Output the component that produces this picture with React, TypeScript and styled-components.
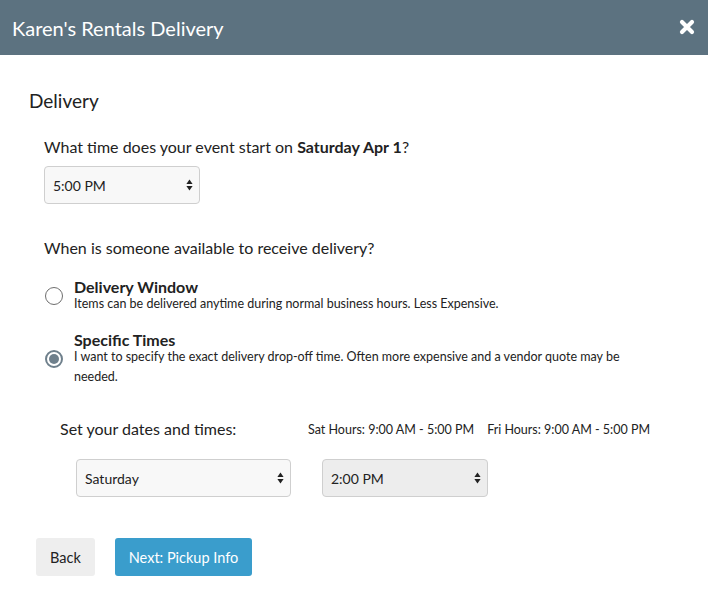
import React from "react";
import styled, { createGlobalStyle } from "styled-components";

const Global = createGlobalStyle`
  html, body { margin: 0; padding: 0; background: #fff; }
  body { font-family: Lato, "Open Sans", "Liberation Sans", sans-serif; color: #222; }
  * { box-sizing: border-box; }
`;

const Header = styled.header`
  height: 55px;
  background: #5c7280;
  display: flex;
  align-items: center;
  justify-content: space-between;
  padding: 0 12px 0 12px;
`;

const Title = styled.h1`
  margin: 0;
  font-size: 20px;
  font-weight: 400;
  color: #fff;
  letter-spacing: 0;
`;

const CloseButton = styled.button`
  border: 0;
  background: transparent;
  padding: 0;
  width: 18px;
  height: 18px;
  display: flex;
  align-items: center;
  justify-content: center;
  cursor: pointer;
  margin-top: -2px;
`;

const Content = styled.main`
  padding: 34px 0 0 29px;
`;

const Heading = styled.h2`
  margin: 0;
  font-size: 19px;
  font-weight: 400;
  line-height: 23px;
`;

const Section = styled.section`
  padding-left: 15px;
`;

const Question = styled.p<{ $top: number }>`
  margin: ${(p) => p.$top}px 0 0;
  font-size: 16px;
  line-height: 22px;
`;

const SelectWrap = styled.div<{ $width: number; $top?: number }>`
  position: relative;
  width: ${(p) => p.$width}px;
  margin-top: ${(p) => p.$top ?? 0}px;
`;

const Select = styled.select<{ $muted?: boolean }>`
  appearance: none;
  -webkit-appearance: none;
  width: 100%;
  height: 38px;
  border: 1px solid #cfcfcf;
  border-radius: 4px;
  background: ${(p) => (p.$muted ? "#ededed" : "#f8f8f8")};
  font-family: Lato, "Open Sans", "Liberation Sans", sans-serif;
  font-size: 14px;
  color: #222;
  padding: 0 24px 0 8px;
  outline: none;
`;

const Arrows = styled.svg`
  position: absolute;
  right: 7px;
  top: 50%;
  transform: translateY(-50%);
  pointer-events: none;
`;

const Options = styled.div`
  margin-top: 19px;
  display: flex;
  flex-direction: column;
  gap: 17px;
`;

const Option = styled.label`
  display: flex;
  align-items: center;
  gap: 11px;
  padding-left: 1px;
  cursor: pointer;
`;

const Radio = styled.span<{ $checked?: boolean }>`
  flex: none;
  width: 18px;
  height: 18px;
  border-radius: 50%;
  border: ${(p) => (p.$checked ? "2px solid #6f808c" : "1.5px solid #6e6e6e")};
  background: #fff;
  display: flex;
  align-items: center;
  justify-content: center;
  &::after {
    content: "";
    display: ${(p) => (p.$checked ? "block" : "none")};
    width: 10px;
    height: 10px;
    border-radius: 50%;
    background: #6f808c;
  }
`;

const OptionText = styled.div`
  display: flex;
  flex-direction: column;
  max-width: 560px;
`;

const OptionTitle = styled.span`
  font-size: 16px;
  font-weight: 700;
  line-height: 18px;
`;

const OptionDesc = styled.span`
  font-size: 12.5px;
  line-height: 20px;
  margin-top: -2px;
`;

const Times = styled.div`
  margin-top: 31px;
  padding-left: 16px;
`;

const TimesHead = styled.div`
  display: flex;
  align-items: center;
  height: 22px;
`;

const TimesLabel = styled.span`
  width: 248px;
  font-size: 16px;
  line-height: 22px;
`;

const Hours = styled.span`
  font-size: 12.5px;
  margin-right: 13px;
`;

const SelectRow = styled.div`
  display: flex;
  gap: 31px;
  margin-top: 19px;
  padding-left: 16px;
`;

const Actions = styled.div`
  display: flex;
  gap: 20px;
  margin-top: 41px;
  padding-left: 7px;
`;

const Button = styled.button<{ $primary?: boolean }>`
  height: 38px;
  padding: 0 14px;
  border: 0;
  border-radius: 3px;
  background: ${(p) => (p.$primary ? "#3a9dcc" : "#eeeeee")};
  color: ${(p) => (p.$primary ? "#fff" : "#222")};
  font-family: Lato, "Open Sans", "Liberation Sans", sans-serif;
  font-size: 14.5px;
  cursor: pointer;
`;

const UpDown = () => (
  <Arrows width="7" height="12" viewBox="0 0 7 12">
    <path d="M3.5 0.5 L6.6 5 H0.4 Z" fill="#222" />
    <path d="M3.5 11.5 L6.6 7 H0.4 Z" fill="#222" />
  </Arrows>
);

const Dropdown = ({
  width,
  value,
  options,
  muted,
  top,
}: {
  width: number;
  value: string;
  options: string[];
  muted?: boolean;
  top?: number;
}) => (
  <SelectWrap $width={width} $top={top}>
    <Select $muted={muted} defaultValue={value}>
      {options.map((o) => (
        <option key={o}>{o}</option>
      ))}
    </Select>
    <UpDown />
  </SelectWrap>
);

export default function App() {
  return (
    <>
      <Global />
      <Header>
        <Title>Karen's Rentals Delivery</Title>
        <CloseButton aria-label="Close">
          <svg width="16" height="16" viewBox="0 0 16 16">
            <path
              d="M3 3 L13 13 M13 3 L3 13"
              stroke="#fff"
              strokeWidth="4.2"
              strokeLinecap="round"
            />
          </svg>
        </CloseButton>
      </Header>
      <Content>
        <Heading>Delivery</Heading>
        <Section>
          <Question $top={24}>
            What time does your event start on <b>Saturday Apr 1</b>?
          </Question>
          <Dropdown
            top={8}
            width={156}
            value="5:00 PM"
            options={["4:00 PM", "5:00 PM", "6:00 PM"]}
          />
          <Question $top={33}>When is someone available to receive delivery?</Question>
          <Options>
            <Option>
              <Radio />
              <OptionText>
                <OptionTitle>Delivery Window</OptionTitle>
                <OptionDesc>
                  Items can be delivered anytime during normal business hours. Less Expensive.
                </OptionDesc>
              </OptionText>
            </Option>
            <Option>
              <Radio $checked />
              <OptionText>
                <OptionTitle>Specific Times</OptionTitle>
                <OptionDesc>
                  I want to specify the exact delivery drop-off time. Often more expensive and a
                  vendor quote may be needed.
                </OptionDesc>
              </OptionText>
            </Option>
          </Options>
          <Times>
            <TimesHead>
              <TimesLabel>Set your dates and times:</TimesLabel>
              <Hours>Sat Hours: 9:00 AM - 5:00 PM</Hours>
              <Hours>Fri Hours: 9:00 AM - 5:00 PM</Hours>
            </TimesHead>
            <SelectRow>
              <Dropdown width={215} value="Saturday" options={["Friday", "Saturday"]} />
              <Dropdown
                width={166}
                muted
                value="2:00 PM"
                options={["1:00 PM", "2:00 PM", "3:00 PM"]}
              />
            </SelectRow>
          </Times>
        </Section>
        <Actions>
          <Button>Back</Button>
          <Button $primary>Next: Pickup Info</Button>
        </Actions>
      </Content>
    </>
  );
}
